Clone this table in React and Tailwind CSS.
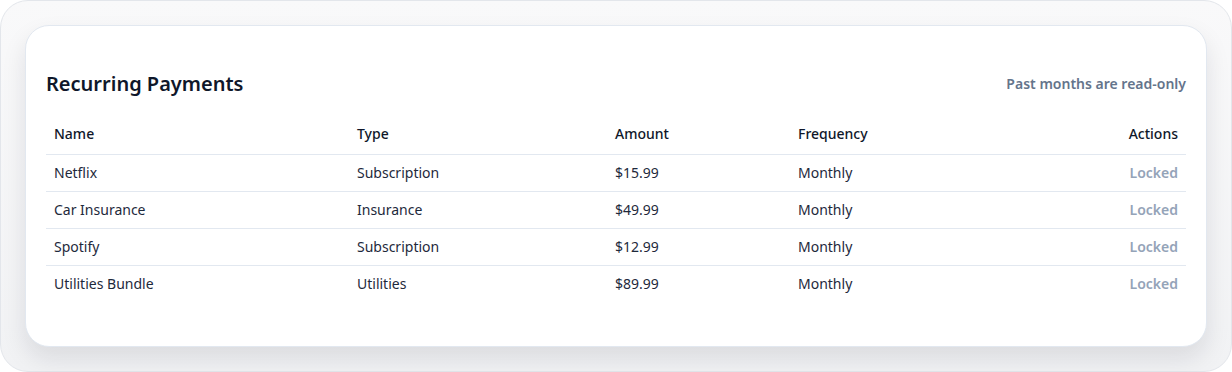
const payments = [
  { name: "Netflix", type: "Subscription", amount: "$15.99", frequency: "Monthly" },
  { name: "Car Insurance", type: "Insurance", amount: "$49.99", frequency: "Monthly" },
  { name: "Spotify", type: "Subscription", amount: "$12.99", frequency: "Monthly" },
  { name: "Utilities Bundle", type: "Utilities", amount: "$89.99", frequency: "Monthly" },
];

const App = () => {
  return (
    <div className="w-[1232px] h-[372px] font-['Noto_Sans',sans-serif]">
      <div className="h-full rounded-[28px] border border-[#e3e6eb] bg-gradient-to-b from-[#f9f9fa] to-[#f1f2f4] p-6">
        <div className="rounded-[24px] border border-[#e2e8f0] bg-white px-5 pt-[44px] pb-[44px] shadow-[0_12px_24px_rgba(15,23,42,0.10)]">
          <div className="flex items-center justify-between mb-4">
            <h2 className="text-xl font-semibold text-[#0f172a]">Recurring Payments</h2>
            <span className="text-sm font-semibold text-[#64748b]">Past months are read-only</span>
          </div>
          <table className="w-full table-fixed border-collapse text-sm">
            <thead>
              <tr className="border-b border-[#e2e8f0] text-[#0f172a]">
                <th className="w-[303px] px-2 py-2.5 text-left font-medium">Name</th>
                <th className="w-[258px] px-2 py-2.5 text-left font-medium">Type</th>
                <th className="w-[183px] px-2 py-2.5 text-left font-medium">Amount</th>
                <th className="w-[250px] px-2 py-2.5 text-left font-medium">Frequency</th>
                <th className="px-2 py-2.5 text-right font-medium">Actions</th>
              </tr>
            </thead>
            <tbody className="text-[#1e293b]">
              {payments.map((p, i) => (
                <tr key={p.name} className={i < payments.length - 1 ? "border-b border-[#e2e8f0]" : ""}>
                  <td className="px-2 py-2">{p.name}</td>
                  <td className="px-2 py-2">{p.type}</td>
                  <td className="px-2 py-2">{p.amount}</td>
                  <td className="px-2 py-2">{p.frequency}</td>
                  <td className="px-2 py-2 text-right font-semibold text-[#94a3b8]">Locked</td>
                </tr>
              ))}
            </tbody>
          </table>
        </div>
      </div>
    </div>
  );
};

export default App;
